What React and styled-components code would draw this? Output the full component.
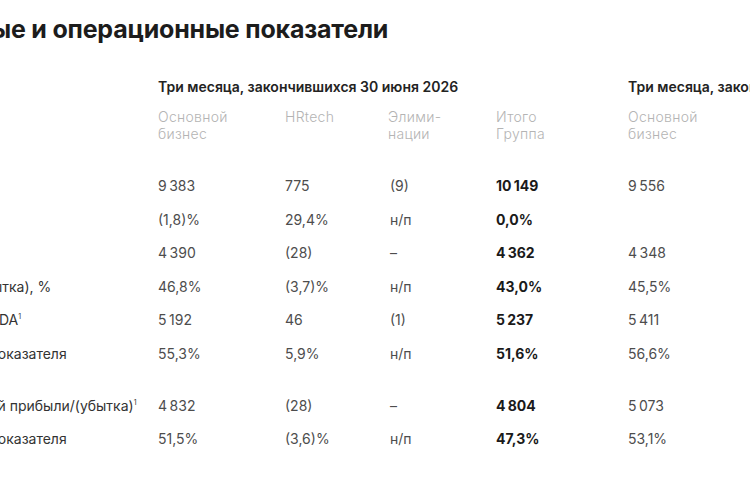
import styled, { createGlobalStyle } from "styled-components";

const GlobalStyle = createGlobalStyle`
  html, body {
    margin: 0;
    padding: 0;
    background: #ffffff;
  }
  body {
    font-family: Inter, "Noto Sans", "Liberation Sans", sans-serif;
    overflow: hidden;
  }
`;

// ширина обрезанной слева части страницы
const SHIFT = 134;
const COLUMNS = `${SHIFT + 158}px 127px 103px 108px 132px 140px 120px`;

const Page = styled.div`
  width: 750px;
  height: 500px;
  overflow: hidden;
`;

const Sheet = styled.div`
  margin-left: -${SHIFT}px;
  padding-top: 14px;
  width: 1150px;
`;

const Title = styled.h2`
  margin: 0;
  font-size: 25px;
  line-height: 30px;
  font-weight: 700;
  color: #1c1c1c;
  letter-spacing: -0.2px;
`;

const Grid = styled.div`
  display: grid;
  grid-template-columns: ${COLUMNS};
  align-items: center;
`;

const PeriodRow = styled(Grid)`
  margin-top: 31px;
  height: 22px;
`;

const Period = styled.div`
  grid-column: ${(p) => p.$col};
  font-size: 14px;
  font-weight: 600;
  color: #232323;
  white-space: nowrap;
`;

const HeadRow = styled(Grid)`
  margin-top: 11px;
  align-items: start;
  height: 61px;
`;

const SubHead = styled.div`
  font-size: 14px;
  line-height: 17px;
  font-weight: 300;
  letter-spacing: 0.3px;
  color: #b4b4b4;
`;

const Row = styled(Grid)`
  height: 33.5px;
`;

const Spacer = styled.div`
  height: 18.5px;
`;

const Label = styled.div`
  font-size: 14px;
  color: #333333;
  white-space: nowrap;

  sup {
    font-size: 7px;
    vertical-align: 6px;
  }
`;

const Cell = styled.div`
  font-size: 14px;
  white-space: nowrap;
  color: ${(p) => (p.$bold ? "#1a1a1a" : "#4d4d4d")};
  font-weight: ${(p) => (p.$bold ? 700 : 400)};
  padding-left: ${(p) => (p.$pad ? "2px" : "0")};
`;

const heads = [
  ["Основной", "бизнес"],
  ["HRtech"],
  ["Элими-", "нации"],
  ["Итого", "Группа"],
  ["Основной", "бизнес"],
];

const rows = [
  { label: "Выручка", values: ["9 383", "775", "(9)", "10 149", "9 556"] },
  { label: "Рост, %", values: ["(1,8)%", "29,4%", "н/п", "0,0%", ""] },
  { label: "Прибыль", values: ["4 390", "(28)", "–", "4 362", "4 348"] },
  { label: "Доля прибыли/(убытка), %", values: ["46,8%", "(3,7)%", "н/п", "43,0%", "45,5%"] },
  { label: "Скорректиров EBITDA", sup: true, values: ["5 192", "46", "(1)", "5 237", "5 411"] },
  { label: "Маржинальность показателя", values: ["55,3%", "5,9%", "н/п", "51,6%", "56,6%"] },
  { spacer: true },
  { label: "Скорректированной прибыли/(убытка)", sup: true, values: ["4 832", "(28)", "–", "4 804", "5 073"] },
  { label: "Маржинальность показателя", values: ["51,5%", "(3,6)%", "н/п", "47,3%", "53,1%"] },
];

const fmt = (v) => v.replace(/(\d) (\d)/g, "$1\u202F$2");

const App = () => {
  return (
    <Page>
      <GlobalStyle />
      <Sheet>
        <Title>Финансовые и операционные показатели</Title>

        <PeriodRow>
          <Period $col="2 / span 4">Три месяца, закончившихся 30 июня 2026</Period>
          <Period $col="6 / span 2">Три месяца, закончившихся 30 июня 2025</Period>
        </PeriodRow>

        <HeadRow>
          <div />
          {heads.map((lines, i) => (
            <SubHead key={i}>
              {lines.map((l) => (
                <div key={l}>{l}</div>
              ))}
            </SubHead>
          ))}
        </HeadRow>

        {rows.map((r, i) =>
          r.spacer ? (
            <Spacer key={i} />
          ) : (
            <Row key={i}>
              <Label>
                {r.label}
                {r.sup && <sup>1</sup>}
              </Label>
              {r.values.map((v, j) => (
                <Cell key={j} $bold={j === 3} $pad={j === 2}>
                  {fmt(v)}
                </Cell>
              ))}
            </Row>
          )
        )}
      </Sheet>
    </Page>
  );
};

export default App;
